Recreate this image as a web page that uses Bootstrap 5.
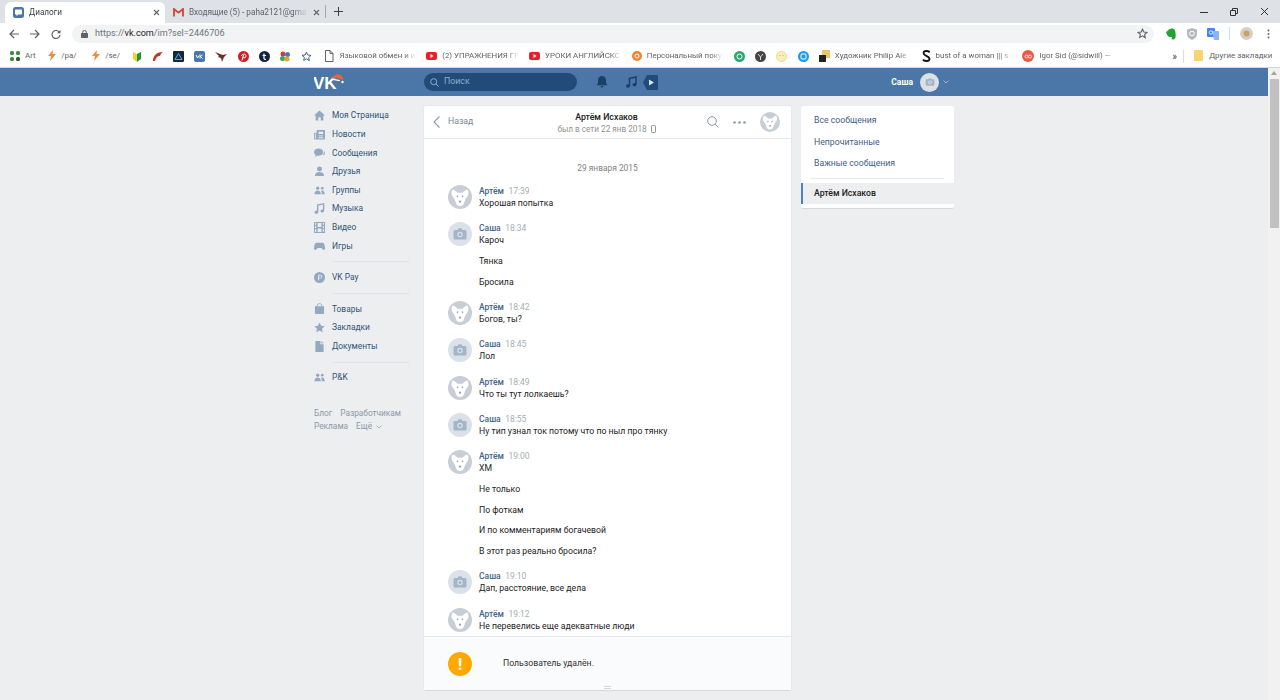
<!DOCTYPE html>
<html lang="ru"><head><meta charset="utf-8"><title>Диалоги</title>
<link rel="stylesheet" href="https://cdn.jsdelivr.net/npm/bootstrap@5.3.0/dist/css/bootstrap.min.css">
<style>
html,body{height:700px;overflow:hidden}
body{font-family:Roboto,"Liberation Sans",sans-serif;font-size:8.7px;background:#edeef0;color:#222}
svg{display:block;flex:none}
.tabstrip{height:23px;background:#dee1e6;padding-left:5px;font-size:8.2px}
.tabitem{height:21px;width:160px;margin-top:2px;padding:0 5px 0 8px;gap:5px;color:#3c4043}
.tabitem.on{background:#fff;border-radius:6px 6px 0 0}
.tabitem.off{color:#5f6368}
.tabtext{flex:1;white-space:nowrap;overflow:hidden;-webkit-mask-image:linear-gradient(90deg,#000 88%,transparent)}
.tabsep{width:1px;height:13px;background:#a6a9ae}
.winbtns{margin-left:auto;gap:18px;padding-right:11px}
.toolbar{height:21px;background:#fff;padding:0 0 0 9px;color:#5f6368}
.navbtns{gap:11px;width:63px}
.omni{width:1082px;height:18px;background:#f1f3f4;border-radius:9px;padding:0 6px 0 9px;font-size:9.1px;color:#70757a;gap:7px}
.omni b{font-weight:400;color:#202124}
.exts{gap:10px;padding-left:11px}
.extsep{width:1px;height:13px;background:#dadce0}
.bookbar{height:24px;background:#fff;border-bottom:1px solid #d6d8db;padding:1px 0 0 10px;gap:10.3px;font-size:7.9px;color:#5f6368;white-space:nowrap}
.bmk{gap:5px}
.bmk span{overflow:hidden;display:block;width:76.5px;-webkit-mask-image:linear-gradient(90deg,#000 85%,transparent)}
.bmk span.lbl13{width:13px;-webkit-mask-image:none}
.bmk span.lbl21{width:20.7px;-webkit-mask-image:none}
.bmk span.lbl18{width:17.7px;-webkit-mask-image:none}
.bmk span.lblend{width:auto;-webkit-mask-image:none}
.bmk.end{padding-right:10px;gap:6px}
.bmkfirstdoc{margin-left:2.5px}
.bmkmore{gap:6px;color:#444;font-size:10px;margin-left:46px}
.pagezone{height:632px}
.scrolled{flex:1;min-width:0}
.vkhead{height:28px;background:#4a76a8;color:#fff}
.wrap640{width:640px;margin:0 auto}
.logozone{width:110px}
.searchbox{width:153px;height:18px;border-radius:9px;background:#224b7a;color:#8fadc8;font-size:8.8px;padding-left:6px;gap:5px}
.headico{gap:18px;padding-left:19px}
.whozone{margin-left:auto;padding-right:5px;font-weight:700;font-size:8.5px}
.whoava{width:19px;height:19px;border-radius:50%;background:#dce1e6;margin:0 4px 0 7px}
.sidecol{width:110px;padding-top:10.2px}
.siderow{height:18.67px;gap:7px;color:#2f5478;font-size:8.4px}
.sidesep{height:1px;background:#dfe2e8;margin:5.9px 15px 5.9px 18px}
.sidefoot{margin-top:20px;color:#8b98a7;font-size:8.3px;line-height:13px}
.sidefoot span{margin-right:8px}
.chatcol{width:367px;height:584px;margin-top:10px;background:#fff;box-shadow:0 1px 0 #d7d8db,0 0 0 1px #e7e8ec;border-radius:2px}
.chathead{height:33px;border-bottom:1px solid #e7e8ec;padding:0 11px 0 9px}
.backlink{color:#75879b;gap:8px;width:90px;font-size:8.7px}
.peer{flex:1;line-height:12px;text-align:center;padding-top:1px}
.peer b{font-weight:500;color:#222;font-size:8.8px;display:block}
.peer small{color:#939393;font-size:8.2px;display:inline-flex;align-items:center;gap:4px}
.headtools{width:90px;justify-content:flex-end;gap:14px}
.chatlog{flex:1;overflow:hidden;padding:0 0 0 24px}
.daymark{text-align:center;color:#828282;font-size:8.4px;padding:23px 24px 11px 0;line-height:12px}
.msgrow{gap:7px;margin-bottom:13.3px;line-height:12px}
.msgava{width:24px;height:24px;border-radius:50%;background:#dae1e8}
.msgava.dogface,.peerava{background:#c7ced6}
.peerava{width:20px;height:20px;border-radius:50%}
.msgwho{font-weight:500;color:#42648b;font-size:8.5px}
.msgwho i{font-style:normal;font-weight:400;color:#a6adb5;margin-left:4.5px}
.msgbody{font-size:8.7px;color:#222}
.msgmore{margin-top:8.7px}
.notice{height:54px;background:#fafbfc;border-top:1px solid #e7e8ec;padding:0 0 0 24px;gap:31px;font-size:8.7px;color:#333}
.warnball{width:24px;height:24px;border-radius:50%;background:#ffa800;color:#fff;font-size:17px;font-weight:700;line-height:24px;text-align:center}
.grip{left:180px;bottom:1px;width:7px;height:3px;border-top:1px solid #d4d8de;border-bottom:1px solid #d4d8de}
.menucol{width:153px;margin:10px 0 0 10px;height:102px;background:#fff;box-shadow:0 1px 0 #d7d8db,0 0 0 1px #eceef1;border-radius:2px;padding-top:4px;font-size:8.7px;color:#3f6086}
.menuitem{height:21.4px;padding-left:13px;display:flex;align-items:center}
.menusep{height:1px;background:#e7e8ec;margin:4px 10px 3.8px}
.menuitem.act{background:#edeef0;border-left:2px solid #5181b8;padding-left:11px;color:#222;font-weight:500}
.vscroll{width:12px;background:#f1f1f1}
.vthumb{width:9px;height:149px;background:#c1c1c1;margin:3px auto 0 1.5px}
.arrowup{height:8px;padding-top:3px}
.videoico{margin-left:-12px}
</style></head>
<body>
<svg width="0" height="0" class="position-absolute">
<symbol id="dog" viewBox="0 0 24 24"><path fill="#fff" d="M4.500 4.500c2 .2 3.800 1.800 5 3.200h5c1.200-1.400 3-3 5-3.200 1.200 1.800 1.200 4.200.5 6l-2.600 3.800-1.900 5c-.5 1.100-1.400 1.700-3.500 1.700s-3-.6-3.500-1.700l-1.900-5L4 10.500c-.7-1.800-.7-4.200.5-6z"/><ellipse cx="9.500" cy="11.300" rx=".9" ry="1.100" fill="#aab3bd"/><ellipse cx="14.500" cy="11.300" rx=".9" ry="1.100" fill="#aab3bd"/><path fill="#8f99a4" d="M10.500 15.800h3L12 18.200z"/></symbol>
<symbol id="cam" viewBox="0 0 24 24"><path fill="#a3b5c8" d="M7 8h2.500l1-1.700h3l1 1.700H17c.8 0 1.500.7 1.500 1.500v6.500c0 .8-.7 1.500-1.500 1.500H7c-.8 0-1.500-.7-1.500-1.500V9.500C5.500 8.700 6.200 8 7 8z"/><circle cx="12" cy="12.500" r="2.700" fill="#dae1e8"/><circle cx="12" cy="12.500" r="1.500" fill="#a3b5c8"/></symbol>
<symbol id="people" viewBox="0 0 12 12"><g fill="#93a9c2"><circle cx="4" cy="3.500" r="1.800"/><circle cx="9" cy="3.500" r="1.500"/><path d="M0.500 10c0-2.500 1.500-4 3.500-4s3.500 1.500 3.500 4zM8.500 10c0-1.500-.3-3-1-3.600.5-.3 1-.4 1.500-.4 1.600 0 2.700 1.500 2.700 4z"/></g></symbol>
</svg>

<div class="d-flex tabstrip">
  <div class="d-flex align-items-center tabitem on">
    <svg width="11" height="11" viewBox="0 0 11 11"><rect width="11" height="11" rx="2.500" fill="#4a76a8"/><path fill="#fff" d="M3 2.500h5c.6 0 1 .4 1 1v3c0 .6-.4 1-1 1H5.500L3.500 9V7.500H3c-.6 0-1-.4-1-1v-3c0-.6.4-1 1-1z"/></svg>
    <div class="tabtext">Диалоги</div>
    <svg width="7" height="7" viewBox="0 0 7 7"><path d="M1 1l5 5M6 1L1 6" stroke="#5f6368" stroke-width="1.100"/></svg>
  </div>
  <div class="d-flex align-items-center tabitem off">
    <svg width="11" height="9" viewBox="0 0 11 9"><path d="M1 8.500V1l4.500 3.600L10 1v7.500" fill="none" stroke="#d0453a" stroke-width="1.800"/></svg>
    <div class="tabtext">Входящие (5) - paha2121@gma</div>
    <svg width="7" height="7" viewBox="0 0 7 7"><path d="M1 1l5 5M6 1L1 6" stroke="#5f6368" stroke-width="1.100"/></svg>
  </div>
  <div class="d-flex align-items-center gap-2"><div class="tabsep"></div>
    <svg width="9" height="9" viewBox="0 0 9 9"><path d="M4.500 0v9M0 4.500h9" stroke="#3c4043" stroke-width="1"/></svg></div>
  <div class="d-flex align-items-center winbtns">
    <svg width="8" height="8" viewBox="0 0 8 8"><path d="M0 4.500h8" stroke="#333"/></svg>
    <svg class="mx-1" width="8" height="8" viewBox="0 0 8 8"><path d="M.5 2.500h5v5h-5zM2.500 2.500v-2h5v5h-2" fill="none" stroke="#333"/></svg>
    <svg width="9" height="9" viewBox="0 0 9 9"><path d="M1 1l7 7M8 1L1 8" stroke="#333"/></svg>
  </div>
</div>

<div class="d-flex align-items-center toolbar">
  <div class="d-flex align-items-center navbtns">
    <svg width="10" height="10" viewBox="0 0 10 10"><path d="M10 5H1M5 1L1 5l4 4" fill="none" stroke="#5f6368" stroke-width="1.200"/></svg>
    <svg width="10" height="10" viewBox="0 0 10 10"><path d="M0 5h9M5 1l4 4-4 4" fill="none" stroke="#5f6368" stroke-width="1.200"/></svg>
    <svg width="10" height="10" viewBox="0 0 10 10"><path d="M8.500 3.500A4 4 0 1 0 9 6" fill="none" stroke="#5f6368" stroke-width="1.200"/><path d="M9.500.8v3.400H6z" fill="#5f6368"/></svg>
  </div>
  <div class="d-flex align-items-center omni">
    <svg width="7" height="8" viewBox="0 0 7 8"><rect y="3" width="7" height="5" rx=".8" fill="#5f6368"/><path d="M1.700 3.500V2.200a1.800 1.800 0 0 1 3.600 0v1.300" fill="none" stroke="#5f6368"/></svg>
    <div class="flex-grow-1">https://<b>vk.com</b>/im?sel=2446706</div>
    <svg width="11" height="11" viewBox="0 0 24 24"><path d="M12 2.500l2.900 6.300 6.900.8-5.100 4.700 1.400 6.800L12 17l-6.100 3.500 1.400-6.800L2.200 9.600l6.900-.8z" fill="none" stroke="#5f6368" stroke-width="2.400"/></svg>
  </div>
  <div class="d-flex align-items-center exts">
    <svg width="12" height="12" viewBox="0 0 12 12"><path fill="#1fa532" d="M3 2.500L4.500 1c1.500-1 4-.5 5 .5 1 1.500 1.500 5 1 8-.3 1.500-2 2.300-3 2-1-.3-1.200-1.500-.5-2.500-1.500.3-3.500 0-4.500-1.500C1.800 6.500 1.500 5 1 4z"/></svg>
    <svg width="10" height="12" viewBox="0 0 10 12"><path fill="#b4b9c0" d="M0 1.500L5 0l5 1.500V6c0 3-2.500 5-5 6-2.500-1-5-3-5-6z"/><circle cx="5" cy="5.500" r="2.300" fill="none" stroke="#fff"/></svg>
    <svg width="12" height="12" viewBox="0 0 12 12"><rect width="8" height="9" rx="1" fill="#4285f4"/><path fill="#8ab4f8" d="M5 3h6c.6 0 1 .4 1 1v7c0 .6-.4 1-1 1H7z"/><circle cx="4" cy="4.500" r="1.700" fill="none" stroke="#fff" stroke-width=".8"/></svg>
    <div class="extsep"></div>
    <svg width="13" height="13" viewBox="0 0 13 13"><circle cx="6.500" cy="6.500" r="6.500" fill="#d6cfc6"/><circle cx="6.500" cy="6.500" r="3" fill="#c8a468"/></svg>
    <svg class="ms-1" width="3" height="10" viewBox="0 0 3 10"><g fill="#5f6368"><circle cx="1.500" cy="1.500" r="1"/><circle cx="1.500" cy="5" r="1"/><circle cx="1.500" cy="8.500" r="1"/></g></svg>
  </div>
</div>

<div class="d-flex align-items-center bookbar">
  <div class="d-flex align-items-center bmk"><svg width="10" height="10" viewBox="0 0 10 10"><g fill="#3b8e3f"><rect width="4" height="4" rx="1.500"/><rect x="6" width="4" height="4" rx="1.500"/><rect y="6" width="4" height="4" rx="1.500"/><rect x="6" y="6" width="4" height="4" rx="1.500" fill="#2b5e2e"/></g></svg><span class="lbl13">Art</span></div>
  <div class="d-flex align-items-center bmk"><svg width="8" height="11" viewBox="0 0 8 11"><path fill="#ef8b3a" d="M5 0L0 6h3l-1 5 6-7H4.500z"/></svg><span class="lbl21">/pa/</span></div>
  <div class="d-flex align-items-center bmk"><svg width="8" height="11" viewBox="0 0 8 11"><path fill="#ef8b3a" d="M5 0L0 6h3l-1 5 6-7H4.500z"/></svg><span class="lbl18">/se/</span></div>
  <svg width="8" height="11" viewBox="0 0 8 11"><path fill="#e4d733" d="M0 1l4 2v8L0 8z"/><path fill="#2c8f3a" d="M8 1L4 3v8l4-3z"/></svg>
  <svg width="11" height="11" viewBox="0 0 11 11"><path fill="#c0391f" d="M1 10C1 5 4 1 11 1 9 2.500 8.500 3.500 8 5 6 4.500 4 6 3 10z"/></svg>
  <svg width="11" height="11" viewBox="0 0 11 11"><rect width="11" height="11" rx="1" fill="#10283a"/><path d="M5.500 2.500L9 8.500H2z" fill="none" stroke="#4db6e6"/></svg>
  <svg width="11" height="11" viewBox="0 0 11 11"><rect width="11" height="11" rx="2" fill="#4a76a8"/><path d="M2 4l1.500 3L5 4.500M6 3.500v4M8.500 4L6.500 5.500 8.500 7.500" fill="none" stroke="#fff"/></svg>
  <svg width="12" height="11" viewBox="0 0 12 11"><path fill="#6b2a25" d="M0 1l5 2 3 1 4-1-3 3-2 5-1-4-3-1 1-1z"/></svg>
  <svg width="11" height="11" viewBox="0 0 11 11"><circle cx="5.500" cy="5.500" r="5.500" fill="#cb2027"/><path d="M4 9.500l1.500-5.500M3.500 5C3.300 2.800 8 2.300 8 4.800c0 2.400-2.500 2.700-3 1.400" fill="none" stroke="#fff"/></svg>
  <svg width="11" height="11" viewBox="0 0 11 11"><circle cx="5.500" cy="5.500" r="5.500" fill="#10243a"/><path d="M5 2.500v5c0 .8.500 1 2 1M3.500 4.500H7" fill="none" stroke="#fff" stroke-width="1.200"/></svg>
  <svg width="10" height="11" viewBox="0 0 10 11"><circle cx="3" cy="3" r="2.500" fill="#d8383d"/><circle cx="7.500" cy="3.500" r="2.500" fill="#4877c4"/><circle cx="2.500" cy="7.500" r="2.500" fill="#3ea55a"/><circle cx="7" cy="8" r="2.500" fill="#e6a133"/></svg>
  <svg width="11" height="11" viewBox="0 0 24 24"><path d="M12 2.500l2.900 6.300 6.900.8-5.100 4.700 1.400 6.800L12 17l-6.100 3.500 1.400-6.800L2.200 9.600l6.900-.8z" fill="none" stroke="#3a5878" stroke-width="2"/></svg>
  <div class="d-flex align-items-center bmk bmkfirstdoc"><svg width="10" height="12" viewBox="0 0 10 12"><path d="M1.500.5h4.500l3 3v8h-7.500zM6 .5v3h3" fill="none" stroke="#5f6368"/></svg><span>Языковой обмен и и</span></div>
  <div class="d-flex align-items-center bmk"><svg width="11" height="8" viewBox="0 0 11 8"><rect width="11" height="8" rx="2" fill="#e8202a"/><path d="M4.500 2v4l3-2z" fill="#fff"/></svg><span>(2) УПРАЖНЕНИЯ ГР</span></div>
  <div class="d-flex align-items-center bmk"><svg width="11" height="8" viewBox="0 0 11 8"><rect width="11" height="8" rx="2" fill="#e8202a"/><path d="M4.500 2v4l3-2z" fill="#fff"/></svg><span>УРОКИ АНГЛИЙСКС</span></div>
  <div class="d-flex align-items-center bmk"><svg width="10" height="10" viewBox="0 0 10 10"><circle cx="5" cy="5" r="5" fill="#ef8432"/><circle cx="5" cy="5" r="2" fill="none" stroke="#fff"/></svg><span>Персональный поку</span></div>
  <svg width="11" height="11" viewBox="0 0 11 11"><circle cx="5.500" cy="5.500" r="5.500" fill="#2aa86b"/><circle cx="5.500" cy="5.500" r="2.500" fill="none" stroke="#fff"/></svg>
  <svg width="11" height="11" viewBox="0 0 11 11"><circle cx="5.500" cy="5.500" r="5.500" fill="#444"/><path d="M3 3l2.500 3V9M8 3L5.500 6" fill="none" stroke="#ddd"/></svg>
  <svg width="11" height="11" viewBox="0 0 11 11"><circle cx="5.500" cy="5.500" r="5" fill="#fbeebc" stroke="#eed68c"/><circle cx="4" cy="4.500" r=".6" fill="#c9a650"/><circle cx="7" cy="4.500" r=".6" fill="#c9a650"/></svg>
  <svg width="11" height="11" viewBox="0 0 11 11"><circle cx="5.500" cy="5.500" r="5.500" fill="#1d9be0"/><rect x="3" y="3" width="5" height="5" rx="1" fill="none" stroke="#fff"/></svg>
  <div class="d-flex align-items-center bmk"><svg width="11" height="12" viewBox="0 0 11 12"><rect x="3" width="8" height="8" fill="#eec46b"/><rect y="5" width="7" height="7" fill="#222"/></svg><span>Художник Philip Ale</span></div>
  <div class="d-flex align-items-center bmk"><svg width="9" height="12" viewBox="0 0 9 12"><path d="M7.500 2.500C7 .500 1.500.300 1.500 3c0 3 6 2.700 6 6 0 2.700-5.500 2.500-6.500.5" fill="none" stroke="#111" stroke-width="1.800"/></svg><span>bust of a woman ||| s</span></div>
  <div class="d-flex align-items-center bmk"><svg width="12" height="12" viewBox="0 0 12 12"><circle cx="6" cy="6" r="6" fill="#ea5a47"/><circle cx="4.500" cy="6.500" r="1.500" fill="none" stroke="#fdd"/><circle cx="8" cy="6.500" r="1.500" fill="none" stroke="#fdd"/></svg><span>Igor Sid (@sidwill) —</span></div>
  <div class="d-flex align-items-center bmkmore">»<div class="extsep"></div></div>
  <div class="d-flex align-items-center bmk end"><svg width="9" height="11" viewBox="0 0 9 11"><rect width="9" height="11" rx="1" fill="#f6d46f"/></svg><span class="lblend">Другие закладки</span></div>
</div>

<div class="d-flex pagezone">
  <div class="scrolled">
    <div class="vkhead">
      <div class="wrap640 h-100 d-flex align-items-center">
        <div class="logozone">
          <svg width="30" height="18" viewBox="0 0 30 18"><text x="-1" y="15.500" font-family="Liberation Sans" font-weight="700" font-size="17" fill="#fff">VK</text><path fill="#e8633f" d="M18 6c1-4 6-6 9-4 1.500 1 2 3 2 5l-5-2z"/><circle cx="28.500" cy="9" r="1.200" fill="#fff"/><path fill="#fff" d="M18 5.500l8 1.500-.5 1.300-8-1.500z"/></svg>
        </div>
        <div class="d-flex align-items-center searchbox">
          <svg width="9" height="9" viewBox="0 0 9 9"><circle cx="3.700" cy="3.700" r="3" fill="none" stroke="#8fadc8"/><path d="M6 6l2.700 2.700" stroke="#8fadc8"/></svg>Поиск
        </div>
        <div class="d-flex align-items-center headico">
          <svg width="12" height="12" viewBox="0 0 12 12"><path fill="#1d3f66" d="M6 0c2.500 0 4 1.800 4 4.200V7l1.500 2.300H.5L2 7V4.200C2 1.800 3.500 0 6 0zM4.500 10h3A1.500 1.500 0 0 1 4.500 10z"/></svg>
          <svg width="11" height="12" viewBox="0 0 11 12"><path fill="none" stroke="#1d3f66" stroke-width="1.500" d="M3.500 10V2.300L10 1v7.500"/><ellipse cx="2" cy="10" rx="2" ry="1.700" fill="#1d3f66"/><ellipse cx="8.500" cy="8.700" rx="2" ry="1.700" fill="#1d3f66"/></svg>
          <svg class="videoico" width="15" height="15" viewBox="0 0 15 15"><path fill="#224b7a" d="M4 0h10c.6 0 1 .4 1 1v13c0 .6-.4 1-1 1H4L0 7.500z"/><path fill="#dce6f0" d="M6 4.500v6l5-3z"/></svg>
        </div>
        <div class="d-flex align-items-center whozone ms-auto">
          <span>Саша</span>
          <div class="whoava d-flex align-items-center justify-content-center"><svg width="16" height="16"><use href="#cam"/></svg></div>
          <svg width="6" height="4" viewBox="0 0 6 4"><path d="M.5.500L3 3 5.500.500" fill="none" stroke="#9db5cf"/></svg>
        </div>
      </div>
    </div>
    <div class="wrap640 d-flex">
      <nav class="sidecol">
        <div class="d-flex align-items-center siderow"><svg width="11" height="11" viewBox="0 0 12 12"><path fill="#93a9c2" d="M6 .5l6 5.500h-1.800v5.500H7.300V8H4.700v3.500H1.800V6H0z"/></svg>Моя Страница</div>
        <div class="d-flex align-items-center siderow"><svg width="11" height="11" viewBox="0 0 12 12"><path fill="#93a9c2" d="M3 1h9v9.500c0 .5-.5 1-1 1H1c-.5 0-1-.5-1-1V4h3zM5 3v2.500h5V3zM5 7v1h5V7zM5 9v1h5V9zM1 5v5.500h1V5z" fill-rule="evenodd"/></svg>Новости</div>
        <div class="d-flex align-items-center siderow"><svg width="11" height="11" viewBox="0 0 12 12"><ellipse cx="5" cy="5.500" rx="5" ry="4" fill="#93a9c2"/><path fill="#93a9c2" d="M2 8.500L1 11l3-1.800zM10.800 4c1.500 1.500 1.500 3.800 0 5-.5-.3-.8-.5-1.300-.5C11 7 11 5.500 10.800 4z"/></svg>Сообщения</div>
        <div class="d-flex align-items-center siderow"><svg width="11" height="11" viewBox="0 0 12 12"><circle cx="6" cy="3.200" r="2.700" fill="#93a9c2"/><path fill="#93a9c2" d="M1 11c0-3 2-4.500 5-4.500S11 8 11 11z"/></svg>Друзья</div>
        <div class="d-flex align-items-center siderow"><svg width="11" height="11"><use href="#people"/></svg>Группы</div>
        <div class="d-flex align-items-center siderow"><svg width="11" height="11" viewBox="0 0 11 12"><path fill="none" stroke="#93a9c2" stroke-width="1.500" d="M3.500 10V2.300L10 1v7.500"/><ellipse cx="2" cy="10" rx="2" ry="1.700" fill="#93a9c2"/><ellipse cx="8.500" cy="8.700" rx="2" ry="1.700" fill="#93a9c2"/></svg>Музыка</div>
        <div class="d-flex align-items-center siderow"><svg width="11" height="11" viewBox="0 0 12 12"><path fill="#93a9c2" fill-rule="evenodd" d="M0 0h12v12H0zM1 1v2h1.500V1zM1 4.500v2h1.500v-2zM1 8v2.500h1.500V8zM9.500 1v2H11V1zM9.500 4.500v2H11v-2zM9.500 8v2.500H11V8zM4 1v4.500h4V1zM4 7v4h4V7z"/></svg>Видео</div>
        <div class="d-flex align-items-center siderow"><svg width="11" height="11" viewBox="0 0 12 12"><path fill="#93a9c2" d="M3 2h6c1.500 0 2.300 1.200 2.600 3l.4 3c.1 1.500-1.500 2.300-2.500 1.200L8 7.500H4L2.500 9.200C1.500 10.300-.1 9.500 0 8l.4-3C.7 3.200 1.500 2 3 2z"/></svg>Игры</div>
        <div class="sidesep"></div>
        <div class="d-flex align-items-center siderow"><svg width="11" height="11" viewBox="0 0 12 12"><circle cx="6" cy="6" r="6" fill="#93a9c2"/><path d="M5 9V3.500h2a1.500 1.500 0 0 1 0 3H5" fill="none" stroke="#edeef0"/></svg>VK Pay</div>
        <div class="sidesep"></div>
        <div class="d-flex align-items-center siderow"><svg width="11" height="11" viewBox="0 0 12 12"><path fill="#93a9c2" d="M1 3.500h10V11c0 .5-.4 1-1 1H2c-.6 0-1-.5-1-1z"/><path d="M3.500 4V2.800C3.500 1.500 4.500.7 6 .7s2.500.8 2.500 2.100V4" fill="none" stroke="#93a9c2"/></svg>Товары</div>
        <div class="d-flex align-items-center siderow"><svg width="11" height="11" viewBox="0 0 24 24"><path fill="#93a9c2" d="M12 1l3.400 7.300 7.900 1-5.800 5.400 1.500 7.800-7-3.900-7 3.900 1.500-7.800L.7 9.300l7.900-1z"/></svg>Закладки</div>
        <div class="d-flex align-items-center siderow"><svg width="11" height="11" viewBox="0 0 12 12"><path fill="#93a9c2" d="M1.500 0h5.500v3.500h3.500V12H1.500zM8 0l2.500 2.500H8z"/></svg>Документы</div>
        <div class="sidesep"></div>
        <div class="d-flex align-items-center siderow"><svg width="11" height="11"><use href="#people"/></svg>P&amp;K</div>
        <div class="sidefoot"><div><span>Блог</span><span>Разработчикам</span></div><div class="d-flex align-items-center"><span>Реклама</span><span class="me-1">Ещё</span><svg width="6" height="4" viewBox="0 0 6 4"><path d="M.5.500L3 3 5.500.500" fill="none" stroke="#aab4c0"/></svg></div></div>
      </nav>
      <main class="chatcol d-flex flex-column position-relative">
        <div class="d-flex align-items-center chathead">
          <div class="d-flex align-items-center backlink"><svg width="7" height="12" viewBox="0 0 7 12"><path d="M6.500.5L1 6l5.500 5.500" fill="none" stroke="#8a9aae" stroke-width="1.100"/></svg>Назад</div>
          <div class="peer"><b>Артём Исхаков</b><small>был в сети 22 янв 2018 <svg width="5" height="8" viewBox="0 0 5 8"><rect x=".5" y=".5" width="4" height="7" rx=".8" fill="none" stroke="#939393"/></svg></small></div>
          <div class="d-flex align-items-center headtools">
            <svg width="12" height="12" viewBox="0 0 12 12"><circle cx="5" cy="5" r="4.300" fill="none" stroke="#8a9aae"/><path d="M8 8l3.500 3.500" stroke="#8a9aae"/></svg>
            <svg width="13" height="3" viewBox="0 0 13 3"><g fill="#8a9aae"><circle cx="1.500" cy="1.500" r="1.300"/><circle cx="6.500" cy="1.500" r="1.300"/><circle cx="11.500" cy="1.500" r="1.300"/></g></svg>
            <svg class="peerava"><use href="#dog"/></svg>
          </div>
        </div>
        <div class="chatlog">
          <div class="daymark">29 января 2015</div>
          <div class="d-flex msgrow"><svg class="msgava dogface"><use href="#dog"/></svg><div><div class="msgwho">Артём<i>17:39</i></div><div class="msgbody">Хорошая попытка</div></div></div>
          <div class="d-flex msgrow"><svg class="msgava"><use href="#cam"/></svg><div><div class="msgwho">Саша<i>18:34</i></div><div class="msgbody">Кароч</div><div class="msgbody msgmore">Тянка</div><div class="msgbody msgmore">Бросила</div></div></div>
          <div class="d-flex msgrow"><svg class="msgava dogface"><use href="#dog"/></svg><div><div class="msgwho">Артём<i>18:42</i></div><div class="msgbody">Богов, ты?</div></div></div>
          <div class="d-flex msgrow"><svg class="msgava"><use href="#cam"/></svg><div><div class="msgwho">Саша<i>18:45</i></div><div class="msgbody">Лол</div></div></div>
          <div class="d-flex msgrow"><svg class="msgava dogface"><use href="#dog"/></svg><div><div class="msgwho">Артём<i>18:49</i></div><div class="msgbody">Что ты тут лолкаешь?</div></div></div>
          <div class="d-flex msgrow"><svg class="msgava"><use href="#cam"/></svg><div><div class="msgwho">Саша<i>18:55</i></div><div class="msgbody">Ну тип узнал ток потому что по ныл про тянку</div></div></div>
          <div class="d-flex msgrow"><svg class="msgava dogface"><use href="#dog"/></svg><div><div class="msgwho">Артём<i>19:00</i></div><div class="msgbody">ХМ</div><div class="msgbody msgmore">Не только</div><div class="msgbody msgmore">По фоткам</div><div class="msgbody msgmore">И по комментариям богачевой</div><div class="msgbody msgmore">В этот раз реально бросила?</div></div></div>
          <div class="d-flex msgrow"><svg class="msgava"><use href="#cam"/></svg><div><div class="msgwho">Саша<i>19:10</i></div><div class="msgbody">Дап, расстояние, все дела</div></div></div>
          <div class="d-flex msgrow"><svg class="msgava dogface"><use href="#dog"/></svg><div><div class="msgwho">Артём<i>19:12</i></div><div class="msgbody">Не перевелись еще адекватные люди</div></div></div>
        </div>
        <div class="d-flex align-items-center notice position-relative">
          <div class="warnball">!</div><div>Пользователь удалён.</div>
          <div class="grip position-absolute"></div>
        </div>
      </main>
      <aside class="menucol">
        <div class="menuitem">Все сообщения</div>
        <div class="menuitem">Непрочитанные</div>
        <div class="menuitem">Важные сообщения</div>
        <div class="menusep"></div>
        <div class="menuitem act">Артём Исхаков</div>
      </aside>
    </div>
  </div>
  <div class="vscroll">
    <div class="arrowup"><svg class="mx-auto" width="6" height="4" viewBox="0 0 6 4"><path d="M3 0l3 4H0z" fill="#a3a3a3"/></svg></div>
    <div class="vthumb"></div>
  </div>
</div>
<script src="https://cdn.jsdelivr.net/npm/bootstrap@5.3.0/dist/js/bootstrap.bundle.min.js"></script>
</body></html>
